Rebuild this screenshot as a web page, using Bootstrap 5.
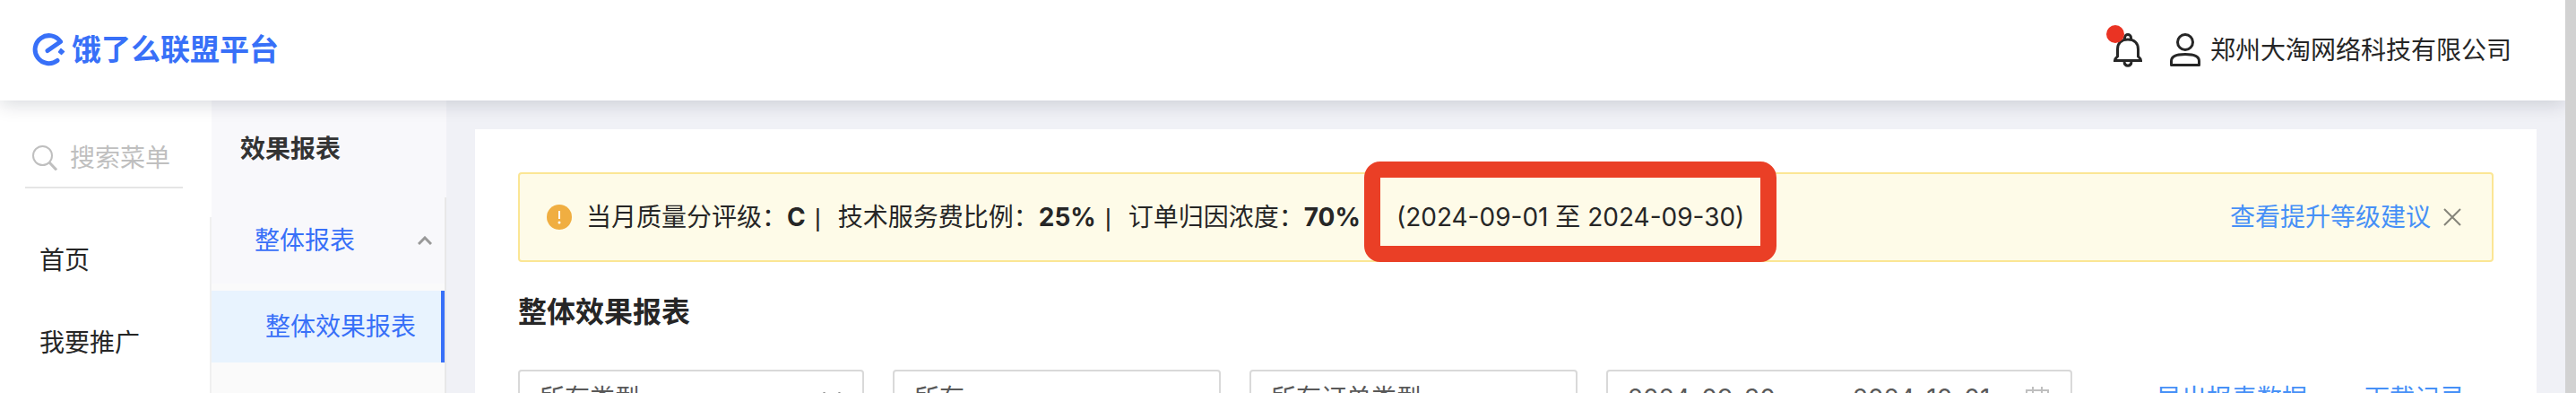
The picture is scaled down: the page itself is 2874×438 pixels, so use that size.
<!DOCTYPE html>
<html lang="zh-CN">
<head>
<meta charset="utf-8">
<meta name="viewport" content="width=device-width, initial-scale=1">
<title>饿了么联盟平台</title>
<link href="https://cdn.jsdelivr.net/npm/bootstrap@5.3.0/dist/css/bootstrap.min.css" rel="stylesheet">
<style>
  body { font-family: Inter, "Noto Sans CJK SC", sans-serif; font-size: 28px; line-height: 40px; color: #262626; background: #f0f1f6; border-right: 12px solid #d2d2d2; }
  a { text-decoration: none; }
  svg { display: block; flex: none; }
  .topbar { height: 112px; padding: 0 60px 0 36px; background: #fff; box-shadow: 0 4px 20px rgba(0, 21, 41, .16); z-index: 2; }
  .logo { gap: 6px; color: #3870f8; font-size: 33px; font-weight: 700; padding-bottom: 2px; }
  .bell-dot { width: 20px; height: 20px; top: -9px; left: -8px; background: #ea3323; }
  .tools { gap: 30px; }
  .account { gap: 10px; }
  .side-main { width: 236px; background: #fff; }
  .search-box { gap: 14px; margin: 44px 32px 0 28px; padding: 0 8px 12px; border-bottom: 2px solid #e5e5e5; color: #bfbfbf; }
  .search-box input { min-width: 0; color: #262626; padding: 0; line-height: 40px; }
  .search-box input::placeholder { color: #bfbfbf; opacity: 1; }
  .side-links { margin-top: 32px; border-right: 2px solid #f0f0f0; }
  .side-links .nav-link { height: 92px; padding: 26px 44px; color: #262626; }
  .side-links .nav-link:first-child { margin-top: 2px; }
  .side-sub { width: 262px; background: #f8f8fb; }
  .side-sub h2 { font-size: 28px; line-height: 40px; margin: 34px 0 0 32px; color: #333; }
  .sub-links { margin-top: 34px; border-right: 2px solid #e8e8e8; }
  .sub-head { height: 96px; padding: 0 14px 0 48px; color: #3870f8; font-size: 28px; line-height: 40px; }
  .sub-list { background: #fafafa; padding-top: 8px; }
  .sub-list .nav-link { height: 80px; padding: 20px 0 20px 60px; background: #e8f3fe; color: #3870f8; border-right: 4px solid #3870f8; }
  .panel { margin: 32px 32px 0; padding: 48px; background: #fff; }
  .notice { height: 100px; padding: 0 34px 0 30px; border: 2px solid #fbe694; border-radius: 4px; background: #fefbe8; }
  .notice-text { margin-left: 16px; }
  .divider { width: 36px; padding-left: 10px; font-family: "Liberation Sans", sans-serif; }
  .period { margin-left: 40px; }
  .marker { inset: -42px -36px -30px -36px; border: 18px solid #ea3f26; border-radius: 18px; pointer-events: none; }
  .blue-link { color: #4690f7; }
  .notice .blue-link { margin-right: 14px; }
  .panel h1 { font-size: 32px; line-height: 48px; margin: 32px 0 40px; }
  .filters { gap: 32px; }
  .field { height: 64px; border: 2px solid #d9d9d9; border-radius: 4px; background: #fff; color: #595959; padding: 0 24px 0 22px; min-width: 0; }
  .field-type { flex: 0 1 386px; }
  .field-scope { flex: 0 1 366px; }
  .field-dates { flex: 0 1 520px; }
  .field select, .field input { border: 0; outline: 0; padding: 0; background: transparent; color: inherit; appearance: none; min-width: 0; }
  .field-dates input { flex: 1 1 0; }
  .field-dates .date-from { flex-grow: 1.3; }
  .actions { gap: 64px; padding: 0 32px; }
</style>
<script src="https://cdn.jsdelivr.net/npm/bootstrap@5.3.0/dist/js/bootstrap.bundle.min.js"></script>
</head>
<body class="vh-100 overflow-hidden d-flex flex-column">
<header class="topbar d-flex align-items-center justify-content-between position-relative flex-shrink-0">
  <a href="#" class="logo d-flex align-items-center">
    <svg width="38" height="38" viewBox="0 0 38 38" fill="none" stroke="#3870f8" stroke-width="5"><path d="M17 20.500L31.500 10.500A15.500 15.500 0 1 0 28 31.500" stroke-linejoin="round" stroke-linecap="round"/><path d="M32 18.500l3.500 3-3 3-3-2.500z" fill="#3870f8" stroke-width="1.500" stroke-linejoin="round"/></svg>
    <span>饿了么联盟平台</span>
  </a>
  <div class="tools d-flex align-items-center">
    <button class="btn p-0 border-0 position-relative" aria-label="通知">
      <svg width="32" height="38" viewBox="0 0 32 38" fill="none" stroke="#262626" stroke-width="3"><path d="M12.500 7V5a3.500 3.500 0 0 1 7 0v2M4.500 26V18C4.500 11 9 7 16 7s11.500 4 11.500 11v8c1 1 3 2 3 4.500h-29C1.500 28 3.500 27 4.500 26ZM12 32c.5 5.500 7.500 5.500 8 0"/></svg>
      <span class="bell-dot position-absolute rounded-circle"></span>
    </button>
    <a href="#" class="account d-flex align-items-center text-reset">
      <svg width="36" height="38" viewBox="0 0 36 38" fill="none" stroke="#262626" stroke-width="3"><circle cx="18" cy="10" r="8.500"/><path d="M2.500 35.500V31C2.500 26 9 23.500 18 23.500S33.500 26 33.500 31v4.500Z" stroke-linejoin="round"/></svg>
      <span>郑州大淘网络科技有限公司</span>
    </a>
  </div>
</header>
<div class="d-flex flex-grow-1">
  <aside class="side-main d-flex flex-column flex-shrink-0">
    <label class="search-box d-flex align-items-center">
      <svg width="28" height="28" viewBox="0 0 28 28" fill="none" stroke="#bfbfbf" stroke-width="2"><circle cx="11.500" cy="11.500" r="10.500"/><path d="M19 19L27 27.500" stroke-width="3"/></svg>
      <input class="border-0 w-100 bg-transparent" type="text" placeholder="搜索菜单" aria-label="搜索菜单">
    </label>
    <nav class="side-links nav flex-column flex-nowrap flex-grow-1">
      <a class="nav-link" href="#">首页</a>
      <a class="nav-link" href="#">我要推广</a>
    </nav>
  </aside>
  <aside class="side-sub d-flex flex-column flex-shrink-0">
    <h2 class="fw-bold">效果报表</h2>
    <nav class="sub-links d-flex flex-column flex-grow-1">
      <button class="sub-head btn rounded-0 border-0 d-flex align-items-center justify-content-between">整体报表
        <svg width="16" height="10" viewBox="0 0 16 10" fill="none" stroke="#999" stroke-width="3"><path d="M1 9l7-7 7 7"/></svg>
      </button>
      <div class="sub-list flex-grow-1"><a class="nav-link" href="#">整体效果报表</a></div>
    </nav>
  </aside>
  <main class="flex-grow-1">
    <section class="panel">
      <div class="notice d-flex align-items-center">
        <svg width="28" height="28" viewBox="0 0 28 28"><circle cx="14" cy="14" r="14" fill="#f0ae41"/><path d="M14 7v9" stroke="#fff" stroke-width="2"/><circle cx="14" cy="20" r="1.500" fill="#fff"/></svg>
        <div class="notice-text text-nowrap">当月质量分评级：<b>C</b><span class="divider d-inline-block">|</span>技术服务费比例：<b>25%</b><span class="divider d-inline-block">|</span>订单归因浓度：<b>70%</b><span class="period position-relative d-inline-block">(2024-09-01 至 2024-09-30)<span class="marker position-absolute"></span></span></div>
        <a href="#" class="blue-link ms-auto text-nowrap">查看提升等级建议</a>
        <button class="btn p-0 border-0" aria-label="关闭"><svg width="20" height="20" viewBox="0 0 20 20" stroke="#85847a" stroke-width="2"><path d="M1 1l18 18M19 1L1 19"/></svg></button>
      </div>
      <h1 class="fw-bold">整体效果报表</h1>
      <form class="filters d-flex">
        <div class="field field-type d-flex align-items-center">
          <select class="flex-grow-1" aria-label="类型"><option>所有类型</option></select>
          <svg width="20" height="14" viewBox="0 0 20 14" fill="none" stroke="#8c8c8c" stroke-width="2"><path d="M1 0l9 12 9-12"/></svg>
        </div>
        <div class="field field-scope d-flex align-items-center"><select class="flex-grow-1" aria-label="范围"><option>所有</option></select></div>
        <div class="field field-scope d-flex align-items-center"><select class="flex-grow-1" aria-label="订单类型"><option>所有订单类型</option></select></div>
        <div class="field field-dates d-flex align-items-center">
          <input class="date-from" type="text" value="2024-09-30" aria-label="开始日期">
          <input type="text" value="2024-10-01" aria-label="结束日期">
          <svg width="26" height="26" viewBox="0 0 26 26" fill="none" stroke="#bfbfbf" stroke-width="2"><path d="M1 4h24v21H1zM1 11h24M8 0v7M18 0v7"/></svg>
        </div>
        <div class="actions ms-auto d-flex align-items-center text-nowrap"><a href="#" class="blue-link">导出报表数据</a><a href="#" class="blue-link">下载记录</a></div>
      </form>
    </section>
  </main>
</div>
</body>
</html>
